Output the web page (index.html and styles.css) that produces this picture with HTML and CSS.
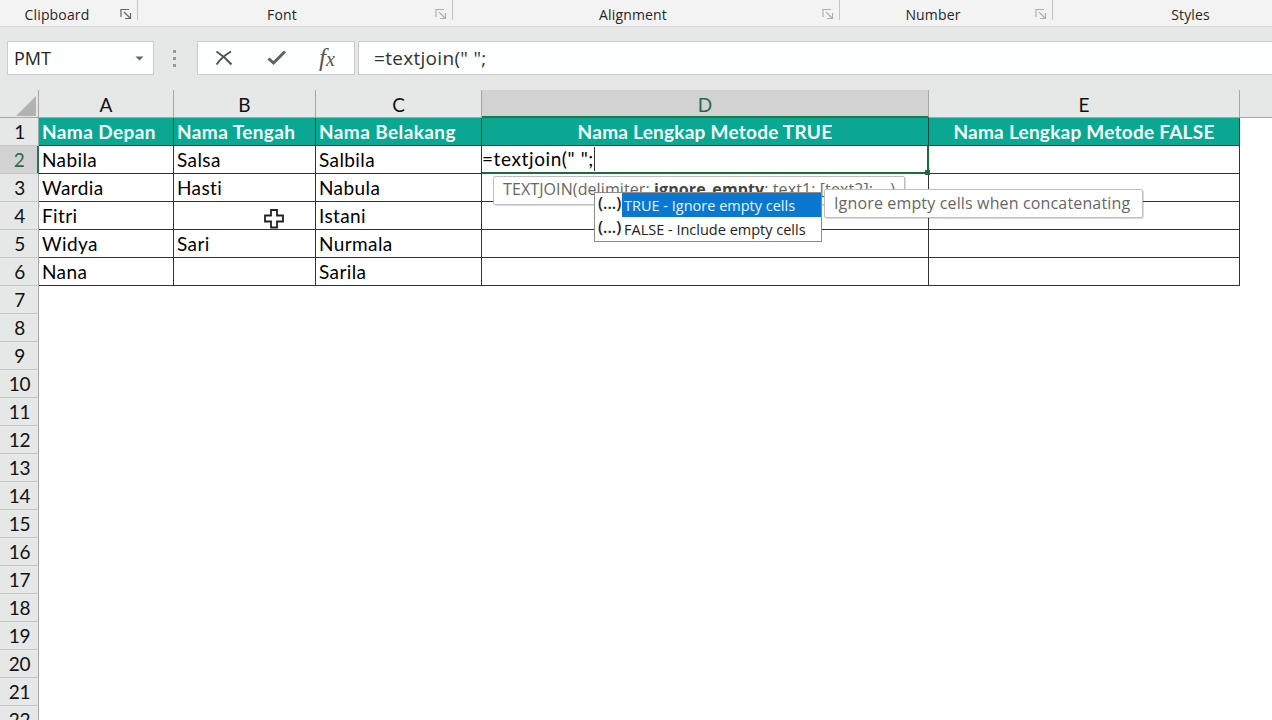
FILE: index.html
```
<!DOCTYPE html>
<html lang="id">

<head>
    <meta charset="UTF-8">
    <title>TEXTJOIN</title>
    <link rel="stylesheet" href="styles.css">
</head>

<body>
    <svg class="defs" width="0" height="0">
        <symbol id="launcher" viewBox="0 0 12 12">
            <path d="M1 9V1.500H9M4 4l6 6M10.500 5v5.500H5" fill="none" stroke="currentColor" stroke-width="1.200" />
        </symbol>
    </svg>

    <div class="ribbon">
        <div class="group clipboard"><span class="label">Clipboard</span><svg class="launcher"><use href="#launcher" /></svg></div>
        <div class="group font"><span class="label">Font</span><svg class="launcher"><use href="#launcher" /></svg></div>
        <div class="group alignment"><span class="label">Alignment</span><svg class="launcher"><use href="#launcher" /></svg></div>
        <div class="group number"><span class="label">Number</span><svg class="launcher"><use href="#launcher" /></svg></div>
        <div class="group styles"><span class="label">Styles</span></div>
    </div>

    <div class="formula-bar">
        <div class="name-box">
            <span>PMT</span>
            <svg width="9" height="5" viewBox="0 0 9 5"><path d="M0.500 0.500h8L4.500 4.500z" fill="#666" /></svg>
        </div>
        <div class="dots"><i></i><i></i><i></i></div>
        <div class="buttons">
            <svg width="18" height="16" viewBox="0 0 18 16"><path d="M1.500 1.500C7 5 12 9.500 16.500 14.500M16 1.500C10 5 5 9.500 1.500 14.500" fill="none" stroke="#505050" stroke-width="2" /></svg>
            <svg width="20" height="16" viewBox="0 0 20 16"><path d="M1.500 8.500L6.500 13 18 1.500" fill="none" stroke="#606060" stroke-width="3" /></svg>
            <span class="fx">f<small>x</small></span>
        </div>
        <div class="formula">=textjoin(" ";</div>
    </div>

    <div class="sheet">
        <table>
            <colgroup>
                <col class="col-n"><col class="col-a"><col class="col-b"><col class="col-c"><col class="col-d"><col class="col-e"><col>
            </colgroup>
            <thead>
                <tr>
                    <th class="corner"><svg width="20" height="20" viewBox="0 0 20 20"><path d="M20 0v20H0z" fill="#b2b2b2" /></svg></th>
                    <th>A</th>
                    <th>B</th>
                    <th>C</th>
                    <th class="active">D</th>
                    <th>E</th>
                    <th class="last"></th>
                </tr>
            </thead>
            <tbody id="rows">
                <tr class="title">
                    <th>1</th>
                    <td>Nama Depan</td>
                    <td>Nama Tengah</td>
                    <td>Nama Belakang</td>
                    <td class="center">Nama Lengkap Metode TRUE</td>
                    <td class="center">Nama Lengkap Metode FALSE</td>
                </tr>
                <tr>
                    <th class="active">2</th>
                    <td>Nabila</td>
                    <td>Salsa</td>
                    <td>Salbila</td>
                    <td class="editing"><div class="edit">=textjoin(" ";<span class="caret"></span></div><span class="handle"></span></td>
                    <td></td>
                </tr>
                <tr>
                    <th>3</th>
                    <td>Wardia</td>
                    <td>Hasti</td>
                    <td>Nabula</td>
                    <td></td>
                    <td></td>
                </tr>
                <tr>
                    <th>4</th>
                    <td>Fitri</td>
                    <td></td>
                    <td>Istani</td>
                    <td></td>
                    <td></td>
                </tr>
                <tr>
                    <th>5</th>
                    <td>Widya</td>
                    <td>Sari</td>
                    <td>Nurmala</td>
                    <td></td>
                    <td></td>
                </tr>
                <tr>
                    <th>6</th>
                    <td>Nana</td>
                    <td></td>
                    <td>Sarila</td>
                    <td></td>
                    <td></td>
                </tr>
            </tbody>
        </table>
    </div>

    <div class="syntax">TEXTJOIN(delimiter; <b>ignore_empty</b>; text1; [text2]; ...)</div>
    <div class="hint">Ignore empty cells when concatenating</div>
    <div class="options">
        <div class="option selected"><span class="paren">(...)</span><span class="text">TRUE - Ignore empty cells</span></div>
        <div class="option"><span class="paren">(...)</span><span class="text">FALSE - Include empty cells</span></div>
    </div>
    <svg class="cursor" width="22" height="22" viewBox="0 0 22 22">
        <path d="M8 2h6v5.500h6v6h-6v6H8v-6H2v-6h6z" fill="#fff" stroke="#222" stroke-width="1.800" />
    </svg>

    <script>
        const rows = document.getElementById('rows');

        // empty rows below the data
        for (let i = 7; i <= 22; i++) {
            const tr = document.createElement('tr');
            tr.className = 'blank';
            tr.innerHTML = '<th>' + i + '</th><td colspan="6"></td>';
            rows.appendChild(tr);
        }
    </script>
</body>

</html>
```
FILE: styles.css
```
* {
    box-sizing: border-box;
}

body {
    margin: 0;
    width: 1272px;
    height: 720px;
    overflow: hidden;
    background-color: #fff;
    font-family: "Open Sans", "Noto Sans", sans-serif;
    color: #262626;
}

.defs {
    position: absolute;
}

.ribbon {
    display: flex;
    height: 27px;
    background-color: #f3f3f3;
    border-bottom: 1px solid #d6d6d6;
    overflow: hidden;
}

.group {
    display: flex;
    flex-shrink: 0;
    height: 20px;
    padding-top: 4px;
    border-right: 1px solid #c4c4c4;
    font-size: 14px;
    line-height: 21px;
}

.label {
    flex: 1;
    padding-left: 1px;
    text-align: center;
    letter-spacing: 0.15px;
}

.launcher {
    width: 12px;
    height: 12px;
    margin: 4px 5px 0 10px;
    color: #b0b0b0;
}

.clipboard {
    width: 138px;
}

.clipboard .launcher {
    margin: 4px 5px 0 7px;
    color: #666;
}

.font {
    width: 315px;
}

.alignment {
    width: 387px;
}

.number {
    width: 213px;
}

.styles {
    width: 275px;
}

.formula-bar {
    display: flex;
    height: 63px;
    padding: 14px 0 0 7px;
    background-color: #e6e7e7;
}

.name-box,
.buttons,
.formula {
    display: flex;
    align-items: center;
    height: 34px;
    border: 1px solid #cbcbcb;
    background-color: #fdfefe;
    font-size: 18px;
}

.name-box {
    width: 147px;
    justify-content: space-between;
    padding: 0 9px 0 6px;
}

.dots {
    display: flex;
    flex-direction: column;
    align-items: center;
    gap: 4px;
    width: 43px;
    padding: 9px 2px 0 0;
}

.dots i {
    width: 3px;
    height: 3px;
    background-color: #999;
}

.buttons {
    width: 158px;
    padding-left: 17px;
}

.buttons svg {
    margin-right: 34px;
}

.buttons svg + svg {
    margin-right: 32px;
}

.fx {
    font-family: "Liberation Serif", serif;
    font-style: italic;
    font-size: 25px;
    line-height: 25px;
    color: #555;
}

.fx small {
    font-size: 20px;
}

.formula {
    flex: 1;
    margin-left: 3px;
    padding-left: 15px;
    border-right: 0;
    font-size: 19px;
    letter-spacing: 0.3px;
    color: #333;
}

table {
    width: 1272px;
    table-layout: fixed;
    border-collapse: separate;
    border-spacing: 0;
}

.col-n {
    width: 39px;
}

.col-a {
    width: 135px;
}

.col-b {
    width: 142px;
}

.col-c {
    width: 166px;
}

.col-d {
    width: 447px;
}

.col-e {
    width: 311px;
}

th,
td {
    height: 28px;
    padding: 0;
    font-family: Lato, sans-serif;
    font-size: 19px;
    line-height: 26px;
    white-space: nowrap;
    overflow: hidden;
}

th {
    background-color: #e6e7e7;
    border-right: 1px solid #a6a6a6;
    border-bottom: 1px solid #c6c6c6;
    font-weight: 400;
    color: #111;
}

tbody th {
    padding: 1px 0 0 1px;
    letter-spacing: -0.3px;
}

thead th {
    padding-top: 3px;
    border-bottom-color: #a6a6a6;
    line-height: 24px;
}

thead th.active {
    background-color: #d2d2d2;
    border-bottom: 2px solid #1b7a50;
    line-height: 23px;
    color: #2b6a4c;
}

thead th.last {
    border-right: 0;
}

.corner svg {
    display: block;
    margin: 2px 0 0 16px;
}

tbody th.active {
    background-color: #d2d2d2;
    border-right: 2px solid #237a4b;
    color: #2b6a4c;
}

td {
    padding-left: 3px;
    border-right: 1px solid #333;
    border-bottom: 1px solid #333;
    letter-spacing: 0.4px;
    color: #000;
}

.title td {
    background-color: #0aa892;
    border-color: #0c4a40;
    font-weight: 700;
    color: #f4fffc;
}

.title .center {
    padding: 0;
    text-align: center;
    letter-spacing: 0.25px;
}

td.editing {
    position: relative;
    padding-left: 0;
    border-right: 2px solid #1d6b40;
    border-bottom: 2px solid #1d6b40;
    letter-spacing: 0.6px;
    overflow: visible;
}

.edit {
    display: flex;
    align-items: center;
    height: 26px;
    line-height: 28px;
}

.caret {
    width: 1px;
    height: 24px;
    background-color: #333;
}

.handle {
    position: absolute;
    right: -3px;
    bottom: -3px;
    width: 5px;
    height: 5px;
    background-color: #1d6b40;
}

.blank td {
    border: 0;
}

.syntax,
.hint,
.options {
    position: absolute;
    white-space: nowrap;
    background-color: #fff;
}

.syntax,
.hint {
    border: 1px solid #bebebe;
    border-radius: 2px;
    padding-left: 9px;
    font-size: 16px;
    letter-spacing: 0.1px;
    color: #666;
    box-shadow: 1px 1px 1px rgba(0, 0, 0, 0.15);
}

.syntax {
    left: 493px;
    top: 176px;
    width: 412px;
    height: 29px;
    line-height: 24px;
}

.syntax b {
    color: #444;
}

.hint {
    left: 824px;
    top: 189px;
    width: 319px;
    height: 29px;
    line-height: 26px;
    letter-spacing: 0.15px;
}

.options {
    left: 594px;
    top: 192px;
    width: 228px;
    height: 50px;
    border: 1px solid #8c8c8c;
}

.option {
    display: flex;
    height: 24px;
    line-height: 26px;
    font-size: 14.5px;
    color: #222;
}

.paren {
    width: 27px;
    padding-left: 3px;
    font-size: 16px;
    line-height: 21px;
    font-weight: 600;
}

.text {
    flex: 1;
    padding-left: 2px;
}

.selected .text {
    background-color: #0a78d0;
    color: #e8f5ff;
}

.cursor {
    position: absolute;
    left: 263px;
    top: 208px;
}
```
